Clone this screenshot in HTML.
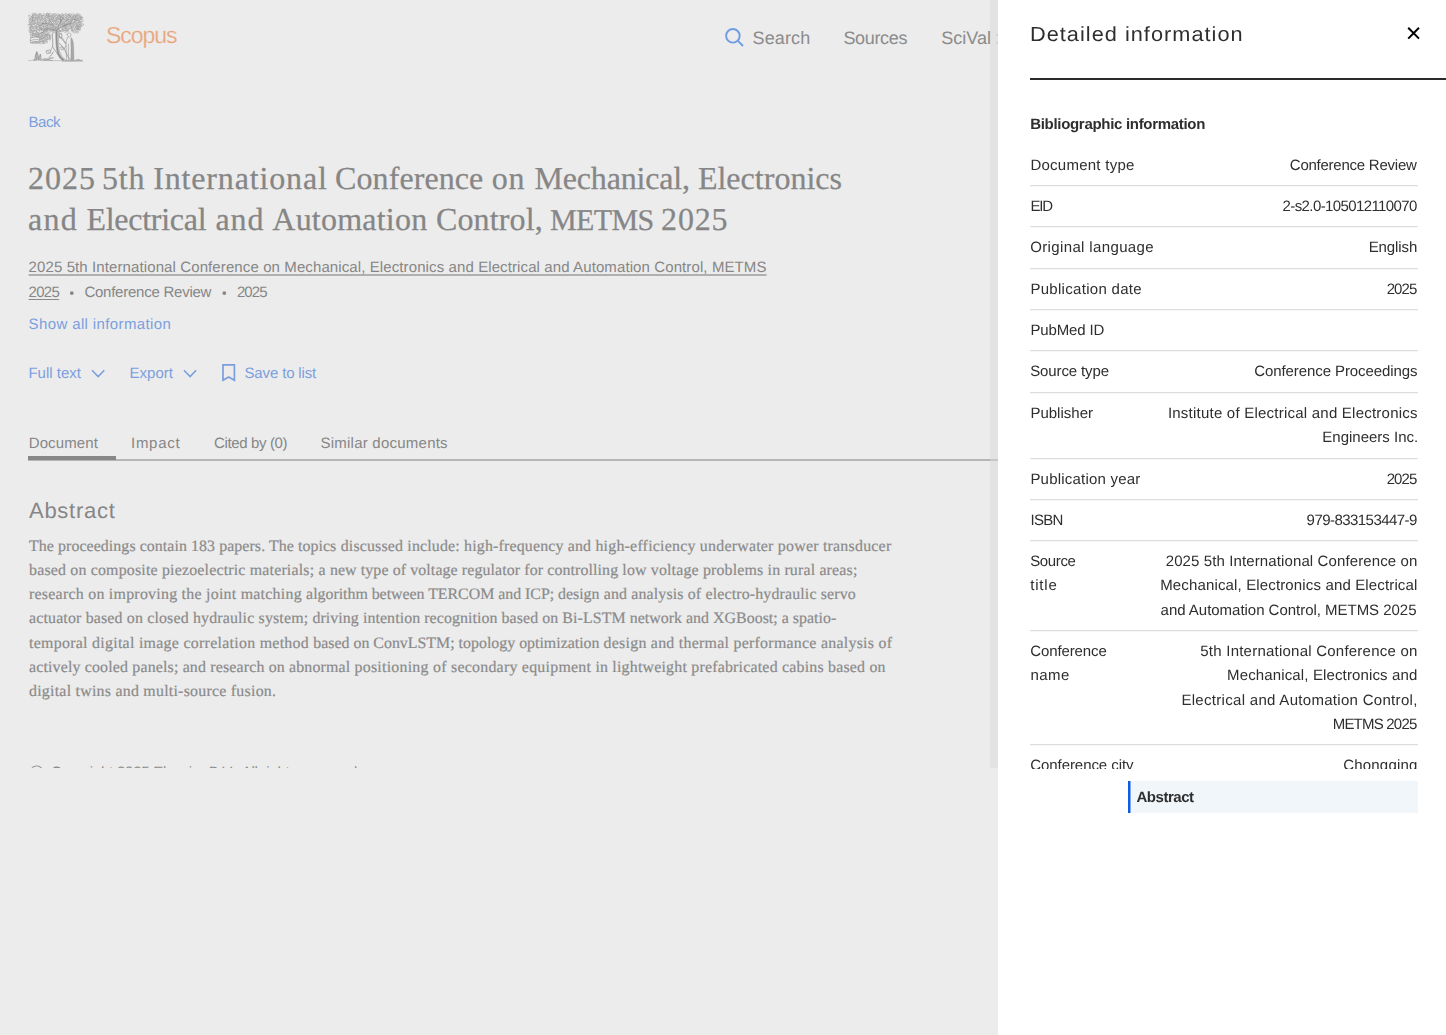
<!DOCTYPE html>
<html lang="en">
<head>
<meta charset="utf-8">
<title>Scopus - Document details</title>
<style>
*{box-sizing:border-box;margin:0;padding:0}
html,body{width:1446px;height:1035px;overflow:hidden;background:#ececec}
body{font-family:"Liberation Sans",sans-serif;position:relative;text-rendering:geometricPrecision}
.t{position:absolute;white-space:nowrap;line-height:1;display:block}
.a{position:absolute;display:block}
#page{position:absolute;left:0;top:0;width:998px;height:768px;overflow:hidden;background:#ececec}
#strip{position:absolute;left:990px;top:0;width:8px;height:768px;background:#e3e3e3}
#panel{position:absolute;left:998px;top:0;width:448px;height:1035px;background:#fff}
#pclip{position:absolute;left:0;top:0;width:448px;height:769px;overflow:hidden;will-change:transform;opacity:.999}
.hr{position:absolute;left:32px;width:388px;height:1px;background:#dddddd;box-shadow:0 1px 0 #f7f7f7}
</style>
</head>
<body>

<div id="page">
<div id="strip"></div>
<svg id="logo" class="a" style="left:26px;top:10px" width="60" height="56" viewBox="26 10 60 56" fill="none" stroke-linecap="round" stroke-linejoin="round">
<path d="M31.8 14.4Q33.3 14.7 33.5 15.5Q33.2 15.8 31.5 16.6M33.3 13.2Q33.6 14.1 34.3 13.8Q35.0 14.1 34.4 15.6Q32.9 15.1 32.5 15.4Q32.1 14.9 32.5 14.5ZM33.9 14.7Q34.6 14.5 34.2 13.4Q34.8 13.4 35.8 13.8Q35.1 14.9 35.7 15.5ZM36.6 15.5Q35.9 14.2 36.2 13.3Q37.0 14.7 37.4 14.6M39.9 14.3Q39.3 14.7 39.9 15.1Q38.3 15.4 38.3 15.7Q39.0 15.5 38.3 14.3Q39.3 13.4 39.8 13.4ZM41.0 13.9Q40.9 14.9 41.9 15.9Q41.6 16.8 40.7 16.2Q40.3 15.6 39.0 15.0ZM43.3 13.4Q44.2 13.7 44.0 14.1Q44.0 15.4 43.5 15.7Q41.6 15.5 41.0 14.7M46.2 16.2Q44.3 15.9 43.8 15.4Q44.3 15.1 44.8 14.3Q45.7 14.3 46.1 14.0ZM48.7 14.7Q47.0 14.9 46.1 15.8Q46.1 14.7 47.0 13.4ZM46.9 15.7Q46.8 15.2 46.5 13.7Q47.0 13.0 48.7 13.4Q49.3 12.8 49.5 13.5Q48.4 15.1 48.7 16.2ZM52.0 15.4Q50.8 16.1 49.6 16.7Q49.4 15.3 48.6 14.0Q49.7 13.8 50.7 13.6M51.8 16.4Q51.8 16.7 50.9 15.8Q50.8 15.3 51.8 14.1Q53.1 13.8 53.9 14.7M53.5 16.0Q52.9 14.9 52.8 13.9Q54.5 13.5 55.5 13.5Q55.7 13.6 55.9 14.4Q56.4 14.4 55.4 15.6M55.5 16.0Q55.0 15.9 54.2 15.2Q54.3 14.2 55.8 14.6Q56.5 14.7 56.6 15.1ZM60.0 15.2Q58.8 15.3 57.5 16.2Q56.4 14.5 56.5 14.0Q56.8 13.5 58.4 14.0ZM57.9 15.5Q58.3 14.9 59.6 14.5Q60.1 14.8 60.2 14.7Q59.7 15.5 58.7 16.1M61.6 15.8Q61.7 14.8 60.9 14.6Q60.8 13.6 61.7 14.0Q62.6 14.7 62.5 14.3M62.3 14.9Q61.9 13.8 62.5 13.7Q62.9 13.5 63.8 14.8Q63.4 15.4 63.8 15.6ZM66.2 15.3Q64.7 15.4 64.3 14.4Q65.9 13.9 66.7 13.1M65.8 14.5Q67.0 14.9 68.2 14.4Q68.5 15.7 67.8 15.9Q67.4 16.5 66.7 15.8M69.1 15.3Q68.8 14.4 68.5 14.9Q69.0 15.2 68.1 14.2Q68.1 14.1 69.3 13.9M71.1 16.8Q70.1 15.6 68.7 15.5Q69.3 14.2 69.6 13.5Q70.8 14.5 71.5 14.9M73.3 14.9Q71.9 16.1 71.8 16.1Q71.0 15.8 71.2 13.9M75.0 15.2Q74.6 15.6 73.9 16.7Q73.0 16.0 73.3 15.8Q73.0 15.5 72.7 14.0Q73.0 13.1 73.6 13.2M75.0 15.9Q74.6 14.9 74.7 14.4Q76.7 14.3 77.0 14.0Q77.1 14.7 77.7 15.6Q76.5 15.0 76.1 15.9ZM78.4 16.0Q78.1 15.1 76.5 14.1Q76.9 13.2 78.3 13.6Q79.7 14.1 79.8 15.0M80.1 14.4Q80.1 15.5 80.1 16.0Q78.5 16.1 78.1 15.7Q77.7 15.1 78.8 14.5M29.3 17.6Q28.6 15.7 28.5 15.2Q28.9 15.9 30.0 15.2Q29.7 16.0 30.6 16.8M32.0 17.4Q31.5 16.5 31.0 17.0Q32.2 17.0 32.0 15.6Q32.4 15.4 32.8 15.3Q33.0 16.7 33.3 17.2ZM33.2 16.2Q33.4 17.0 33.8 17.0Q32.8 17.1 33.2 17.9Q33.3 17.2 31.9 17.6Q31.9 17.5 32.6 16.5ZM35.1 18.1Q34.9 17.5 34.1 17.1Q34.6 17.1 36.0 16.5Q36.9 16.5 36.5 17.2ZM37.2 18.0Q36.8 17.5 35.6 17.7Q36.6 16.4 36.2 15.1Q36.6 15.1 38.0 16.0ZM38.9 18.2Q38.1 16.6 38.5 16.4Q38.6 16.0 39.8 16.5Q40.0 17.3 39.7 18.0ZM41.6 16.6Q42.1 17.2 41.5 18.1Q39.9 17.6 39.7 17.3Q39.7 17.3 40.1 16.0Q40.0 15.3 40.9 15.1M42.2 15.2Q42.7 16.1 42.8 17.4Q41.9 18.1 41.5 17.3ZM45.2 18.2Q43.9 16.7 43.5 15.5Q44.9 17.0 46.3 17.3ZM46.8 15.7Q47.0 15.6 48.6 17.0Q48.0 17.3 47.2 18.1Q47.2 17.9 45.7 16.5M47.4 16.4Q47.2 15.4 47.6 15.1Q47.8 14.9 48.7 15.5Q48.6 15.8 48.8 17.1Q47.8 16.6 47.6 16.9M49.7 16.9Q49.2 17.2 49.1 16.2Q48.7 14.9 49.2 15.0Q50.1 16.0 50.8 15.9ZM50.5 16.5Q50.9 16.1 52.3 16.5Q52.1 17.2 51.5 17.5ZM54.0 17.1Q53.1 17.3 52.1 17.0Q52.1 15.7 52.5 15.0Q54.2 15.9 54.3 16.2ZM53.2 17.4Q53.3 17.2 55.0 15.8Q55.4 17.3 56.1 17.8ZM59.3 16.9Q58.9 18.0 58.4 17.7Q57.1 17.2 57.1 16.7Q58.0 17.0 57.8 15.9ZM57.3 17.2Q58.4 16.9 59.0 15.4Q59.6 17.4 59.9 19.1ZM61.8 16.5Q61.1 17.6 61.9 17.6Q60.7 17.3 60.7 16.8Q60.9 16.5 60.9 15.8ZM62.6 16.0Q62.8 14.9 63.3 15.2Q63.5 16.0 64.1 17.2Q63.9 17.7 62.8 18.2Q62.5 16.7 61.6 16.7ZM66.8 17.5Q66.8 17.9 65.8 17.4Q65.1 17.3 63.9 16.5Q63.9 16.7 64.7 15.8Q65.9 15.5 66.6 16.0ZM67.2 18.1Q66.1 18.3 66.0 17.5Q65.5 17.2 66.2 16.7Q67.0 16.0 67.5 15.7Q68.5 16.9 68.3 17.9ZM68.4 15.0Q68.7 14.9 69.7 14.9Q69.8 16.2 70.6 16.0Q70.8 17.4 69.8 17.3Q69.1 17.5 67.1 16.9M69.2 16.6Q69.0 15.5 69.2 15.4Q70.1 15.7 70.7 15.7Q70.3 16.7 70.8 17.2ZM72.6 17.6Q71.2 17.9 71.1 17.2Q72.6 16.8 72.9 16.2ZM75.4 17.4Q73.6 17.2 73.4 16.8Q74.6 15.5 74.5 15.3ZM76.6 15.9Q77.1 17.4 77.8 17.6Q76.0 17.9 75.5 17.8Q74.8 17.8 75.1 16.2ZM79.4 15.9Q79.8 16.3 78.7 17.6Q78.3 16.3 76.6 16.5Q76.4 15.3 77.0 15.0M81.1 16.4Q81.1 16.6 80.9 18.3Q79.2 18.6 79.0 17.4Q78.9 17.4 79.6 16.2M82.3 17.3Q80.7 17.1 80.5 16.3Q81.3 16.4 81.7 16.0M30.5 18.3Q30.0 18.1 30.8 19.0Q30.7 19.1 29.7 20.0Q29.1 19.4 29.1 19.1Q28.8 18.3 29.9 18.3ZM33.1 18.5Q33.6 18.1 32.8 18.9Q32.5 18.7 31.2 19.4Q30.2 18.3 30.7 18.1Q31.8 18.6 32.1 17.5ZM34.1 20.4Q33.7 19.9 32.4 19.5Q32.9 19.0 31.8 18.2Q32.4 17.6 34.3 17.6Q34.1 18.4 35.3 17.7M34.8 19.9Q35.2 19.2 34.8 17.6Q36.0 17.6 36.7 18.0Q36.4 18.1 36.7 19.4M36.8 19.1Q37.4 17.8 36.9 17.7Q36.9 17.6 38.1 18.4Q37.8 19.1 38.1 19.8ZM38.1 16.6Q38.8 17.1 40.1 18.3Q38.5 19.5 38.2 19.3ZM42.1 17.9Q42.2 18.8 42.2 18.9Q41.8 18.7 41.7 19.4Q41.5 19.7 40.5 18.9Q41.3 18.6 41.3 17.7M42.3 19.4Q42.2 17.8 42.1 17.7Q43.8 17.9 44.3 18.0M45.8 19.4Q45.2 19.6 45.5 19.8Q43.9 20.1 43.7 19.5Q43.8 18.8 44.2 18.6Q45.4 18.4 45.8 18.2M46.1 17.3Q46.8 17.2 47.2 18.3Q46.9 19.1 47.2 20.3Q46.5 20.2 44.4 18.6M50.0 18.4Q49.2 19.2 48.9 19.5Q48.8 19.3 47.7 18.1ZM50.5 18.1Q51.1 18.5 50.8 19.3Q50.1 19.0 49.1 19.2Q49.0 18.8 48.9 18.0ZM51.2 18.7Q51.1 17.2 52.6 17.3Q53.8 18.3 53.5 18.9ZM53.8 17.4Q54.8 17.9 54.5 18.2Q54.0 18.4 53.1 19.2Q53.0 18.0 52.8 17.7ZM56.8 19.1Q55.5 19.8 55.9 19.3Q55.6 19.1 55.5 18.7Q56.0 18.8 56.0 17.8Q56.4 17.9 57.2 18.2M58.7 19.3Q58.1 19.0 56.2 20.3Q56.8 19.1 56.7 17.5ZM58.8 18.4Q60.1 18.6 59.8 17.6Q60.1 17.5 61.0 18.3Q60.3 18.3 59.7 19.4ZM63.0 18.8Q60.9 19.4 60.2 19.0Q60.8 18.4 61.5 17.0ZM64.2 19.4Q62.3 19.5 61.8 18.8Q63.1 18.5 63.2 17.7ZM65.6 19.7Q65.4 20.0 64.2 19.5Q64.8 18.7 65.6 17.3Q66.0 17.4 66.7 19.0M67.5 20.0Q66.2 19.6 65.9 20.5Q65.8 19.2 65.8 18.6Q66.2 18.1 66.3 17.8Q67.8 19.3 68.6 19.5ZM69.2 17.7Q68.9 18.5 70.3 18.8Q70.3 18.8 69.2 20.0Q68.5 19.7 68.4 18.6ZM70.5 19.1Q70.2 18.9 70.6 18.0Q70.7 17.6 71.3 18.0Q71.8 18.5 71.9 18.6Q72.0 19.2 71.2 19.4M73.3 17.5Q72.9 18.5 73.5 18.0Q73.5 18.8 72.5 18.7Q71.8 18.0 71.7 18.5Q72.5 18.8 72.0 17.5ZM74.8 18.0Q75.5 17.9 76.3 18.8Q75.7 19.8 75.8 20.0Q75.3 19.6 73.8 19.3Q73.1 19.2 73.6 18.1M77.0 17.5Q76.7 18.4 76.8 19.3Q75.3 19.0 74.9 20.2Q75.5 18.7 74.6 17.6ZM77.1 18.5Q78.4 18.0 78.3 18.1Q77.8 18.9 78.7 19.7Q78.3 19.8 77.6 19.5ZM79.6 19.9Q79.3 18.5 80.4 16.8Q80.9 17.7 81.8 19.7M82.7 17.7Q81.7 19.2 82.1 19.4Q80.9 19.4 80.6 19.3Q80.7 18.7 80.1 17.4Q80.4 16.7 80.8 17.3ZM29.3 21.7Q29.7 20.6 28.8 20.5Q29.8 20.4 29.5 19.3Q30.8 18.9 30.9 19.7Q30.5 19.8 30.4 21.2M31.4 21.7Q31.9 20.6 31.2 20.4Q31.6 19.2 32.3 19.2Q32.2 20.7 32.8 21.1ZM33.8 19.5Q34.0 20.0 33.1 21.7Q33.2 21.4 32.4 19.5ZM34.4 20.3Q35.0 19.9 34.5 19.5Q34.5 19.4 35.6 19.6Q36.4 19.5 36.0 20.3Q35.9 19.9 35.6 20.6ZM38.3 21.6Q37.8 20.7 36.8 20.9Q36.7 19.5 37.2 19.6M37.2 20.9Q38.1 19.7 39.8 19.4Q40.9 19.6 41.0 20.1Q39.4 21.2 38.9 22.8ZM39.4 20.5Q40.6 20.6 41.6 19.5Q40.8 20.1 40.6 21.9M43.0 21.0Q42.9 20.4 42.2 20.7Q41.0 19.9 41.3 18.8Q42.3 18.9 43.1 18.9M45.6 21.2Q44.5 20.8 43.3 21.3Q42.8 20.6 43.1 19.4ZM45.8 20.2Q46.2 20.8 46.5 19.8Q46.5 20.1 47.1 20.8Q47.0 21.1 46.6 22.0Q45.4 21.9 45.3 21.1ZM49.6 20.8Q49.2 21.4 48.4 21.0Q48.7 21.2 47.7 20.2Q48.0 20.3 49.7 20.0ZM51.4 19.3Q51.1 19.9 50.4 21.8Q50.1 21.5 49.4 19.7ZM52.7 21.7Q52.0 20.5 50.5 20.0Q51.2 19.8 52.0 18.9ZM54.7 19.9Q53.8 20.2 54.5 21.1Q54.4 20.8 53.1 21.4Q53.1 20.5 52.9 19.6ZM56.9 21.3Q56.3 20.7 54.9 20.0Q56.9 19.9 57.3 19.3M57.5 21.6Q57.6 20.5 56.4 20.7Q57.5 19.4 57.5 19.7Q58.5 20.3 58.6 20.6ZM60.1 19.4Q60.7 20.2 61.0 21.4Q59.8 21.6 59.1 21.0M61.1 21.2Q60.3 21.5 60.1 20.2Q61.4 20.4 61.5 19.0Q61.0 19.5 62.0 20.7M62.1 19.7Q62.2 19.5 63.5 19.6Q63.6 20.1 64.1 20.4Q63.8 21.7 63.4 21.8Q63.4 21.3 61.9 20.8ZM64.2 21.1Q65.9 21.1 66.4 20.5Q66.4 21.9 65.4 21.8M66.0 20.0Q65.7 18.8 66.9 19.2Q67.7 19.8 67.9 20.2Q67.8 20.5 66.4 21.2ZM68.7 18.7Q68.8 18.6 68.8 19.9Q67.9 21.1 68.3 20.9Q67.7 20.4 67.1 20.1ZM70.0 19.8Q70.5 19.4 71.1 19.4Q71.2 20.7 72.7 20.7Q71.6 21.9 70.2 21.6ZM73.5 19.4Q72.6 20.0 72.6 20.9Q72.4 20.2 71.4 20.5Q71.4 20.4 72.0 19.0ZM74.4 21.3Q74.9 20.3 73.9 19.6Q75.2 19.4 75.2 19.0Q75.2 19.8 75.5 20.6ZM76.3 19.6Q76.2 19.7 77.1 20.3Q76.9 20.4 76.0 21.0Q76.4 19.8 75.2 19.5M78.7 21.0Q78.0 20.0 76.8 20.4Q77.5 20.2 77.1 19.3Q78.2 18.3 78.6 18.8M78.6 18.5Q79.2 18.2 80.4 18.8Q79.6 20.3 80.0 21.1Q78.9 20.5 78.6 20.3M83.2 21.5Q82.6 21.4 80.4 21.6Q81.7 20.1 81.6 19.9Q82.1 19.6 83.2 20.1M29.8 21.3Q30.3 22.6 30.5 22.6Q29.6 23.5 29.8 23.5Q29.5 23.5 28.7 22.2M31.6 21.2Q32.4 22.7 33.4 23.4Q33.0 23.5 31.4 24.3ZM33.5 20.5Q34.4 20.1 35.1 20.7Q34.6 22.6 35.2 23.6Q34.1 23.1 33.8 23.3Q33.8 21.8 32.3 21.4ZM34.7 21.7Q35.2 21.4 35.5 21.6Q36.2 22.4 36.0 23.0Q35.8 22.6 34.8 23.2Q34.8 22.9 34.2 22.2ZM37.4 23.3Q37.1 22.8 36.9 22.2Q36.9 22.1 37.5 21.8Q37.1 22.4 38.1 23.1M38.6 21.6Q39.5 22.7 39.9 22.4Q39.8 22.5 39.1 23.3Q38.1 22.1 37.9 22.1ZM42.2 23.5Q40.7 24.1 40.3 23.3Q41.0 22.1 40.7 21.6Q40.6 21.3 42.0 22.2M44.4 23.2Q43.8 24.3 43.3 23.8Q42.3 22.5 42.6 22.5Q43.0 21.8 43.7 22.1M43.9 21.6Q44.5 20.9 45.5 21.8Q45.3 23.0 44.1 23.7Q43.8 24.1 43.3 24.5Q42.9 23.4 42.4 22.3ZM45.9 22.6Q47.0 22.0 46.6 21.4Q47.3 21.7 47.5 22.6ZM48.6 21.0Q49.9 20.5 49.6 21.0Q49.9 21.3 49.3 22.4Q49.7 22.8 48.9 22.6Q48.0 22.6 48.1 22.0M49.9 20.8Q50.8 22.4 50.7 22.6Q50.1 23.6 49.0 23.2ZM53.5 22.3Q53.3 22.5 52.8 23.8Q51.7 23.8 51.2 23.1Q51.3 23.0 51.7 21.7M55.5 20.8Q55.4 22.1 55.2 23.9Q54.6 24.2 54.0 23.6Q53.3 22.3 53.0 21.6ZM56.4 23.1Q54.8 22.2 54.3 21.2Q54.5 21.3 55.4 20.8Q56.3 20.3 57.6 20.9M59.0 21.1Q57.5 22.7 57.4 23.9Q56.9 23.1 55.9 22.0M60.3 23.7Q60.3 23.3 59.1 22.3Q59.7 22.1 60.8 22.0M61.4 23.7Q60.5 23.2 60.3 22.6Q60.8 22.5 61.1 21.0Q62.4 20.6 62.2 21.6ZM62.5 21.9Q63.6 22.8 65.3 22.9Q64.2 23.4 62.4 23.9M66.1 23.1Q64.6 23.8 64.1 23.2Q64.2 22.1 63.8 21.3Q64.5 22.0 65.5 21.8M67.4 22.8Q66.8 22.4 65.6 21.2Q66.8 21.4 66.7 20.6Q67.5 20.7 68.8 21.8M69.2 23.7Q67.8 23.4 67.3 22.4Q69.5 22.4 70.2 22.2ZM71.9 23.4Q71.2 23.7 70.6 23.6Q70.8 22.4 70.0 22.3Q71.4 22.9 71.6 22.5ZM71.5 22.9Q70.8 22.4 70.9 21.8Q72.4 21.2 72.7 21.1Q73.4 21.8 74.5 23.0Q74.1 23.8 73.2 23.4ZM74.2 21.3Q73.9 21.2 75.1 21.2Q75.6 22.5 75.6 22.9Q75.2 23.9 75.3 23.3Q74.2 23.3 74.1 22.4ZM74.6 22.0Q75.0 21.7 75.8 20.7Q76.1 22.0 76.6 22.2Q75.5 23.1 75.3 22.7M79.4 21.5Q77.9 23.1 76.8 23.4Q77.5 22.3 76.7 20.8ZM79.8 23.0Q79.7 23.2 78.1 22.5Q79.4 20.8 79.3 20.4Q79.7 20.6 80.6 22.2ZM29.7 22.6Q29.7 23.0 31.2 24.7Q30.4 23.8 28.0 24.6M31.9 24.9Q30.4 24.8 30.3 24.8Q29.9 24.0 30.4 23.5Q30.1 22.8 31.0 23.7Q32.5 23.8 32.3 24.5M32.4 24.7Q31.9 24.7 32.8 23.1Q34.0 24.4 34.1 24.1Q33.2 24.0 33.2 25.3M35.5 25.3Q34.7 24.6 33.8 23.8Q35.3 24.0 36.2 22.7M36.7 24.6Q36.5 24.1 37.1 23.3Q37.4 23.2 38.2 24.0Q37.7 24.0 38.1 25.3M39.3 23.8Q39.5 24.2 40.3 24.4Q39.8 25.5 39.7 25.4Q39.6 25.7 38.6 24.8ZM39.4 24.0Q40.3 24.2 41.7 24.1Q41.3 25.6 40.7 25.5Q39.2 25.6 39.1 25.0ZM42.3 22.6Q43.5 23.4 43.8 23.2Q42.6 23.6 42.6 25.1Q41.8 24.2 41.8 24.5ZM46.1 24.5Q45.9 25.2 45.2 25.4Q44.7 25.2 44.1 24.0Q44.0 23.8 44.7 23.4Q44.4 22.9 45.6 23.1ZM45.9 25.2Q44.9 23.8 44.4 23.8Q45.0 23.1 45.9 22.7Q47.2 23.4 47.9 24.7ZM47.7 24.7Q48.4 23.8 48.2 23.2Q48.8 23.4 49.4 23.5Q49.9 24.7 49.1 25.0ZM51.1 23.6Q51.9 23.4 51.4 23.8Q50.9 24.4 50.9 25.3Q50.2 24.4 49.7 24.8Q50.0 24.2 49.3 23.4ZM51.0 24.6Q51.8 23.6 51.3 23.7Q51.9 23.9 53.0 24.1Q51.6 25.7 51.8 25.7ZM54.2 23.1Q54.4 23.3 54.5 23.8Q53.7 24.4 53.1 25.0Q53.1 24.2 52.8 23.8Q53.4 23.1 53.1 23.4M54.8 22.7Q55.4 22.3 55.3 22.8Q55.5 22.5 56.6 23.2Q57.4 23.1 57.1 24.3Q55.6 25.0 55.2 24.4M57.5 21.9Q57.7 22.2 58.8 23.6Q57.9 24.8 58.2 25.1Q57.8 24.6 56.0 24.3M59.3 25.6Q59.1 25.7 57.9 25.1Q59.5 23.9 60.3 23.3ZM60.7 22.9Q62.1 22.7 62.7 22.7Q62.9 23.2 62.5 24.9Q62.0 24.3 60.5 25.0M64.1 26.1Q63.7 24.4 62.5 23.7Q63.0 24.0 63.7 23.6Q64.8 24.8 65.1 24.7ZM65.7 24.6Q65.9 24.5 65.1 24.9Q63.9 24.7 64.0 24.2Q63.8 23.9 64.9 23.5M66.0 24.1Q67.1 23.4 67.5 23.1Q67.9 23.3 67.7 24.7ZM68.5 25.2Q67.7 24.6 68.0 23.9Q68.8 23.6 69.6 23.7ZM70.2 24.3Q70.3 23.3 69.6 23.4Q69.7 22.3 70.7 22.8Q70.8 23.3 71.2 23.8ZM72.7 24.5Q71.8 23.6 72.0 23.4Q72.2 23.3 73.8 22.4ZM73.6 22.6Q73.7 23.5 74.8 25.3Q73.3 24.8 72.8 24.7M75.4 23.9Q76.4 23.5 76.8 23.5Q77.0 24.8 78.2 24.6Q77.6 25.3 76.5 25.3ZM78.2 22.7Q78.6 24.7 80.2 25.1Q80.0 25.5 78.8 26.6Q78.1 25.2 76.3 24.6ZM80.9 22.9Q80.0 23.3 79.4 25.1Q79.4 24.4 78.8 22.6ZM83.7 24.8Q82.6 24.6 81.6 25.9Q81.0 26.4 80.8 25.3Q80.1 25.3 80.3 24.1Q80.8 23.7 81.7 23.2ZM29.9 26.8Q28.8 26.8 28.8 25.9Q28.4 25.3 29.1 24.6Q29.2 24.4 30.8 25.1M30.5 26.8Q30.6 25.9 31.5 25.2Q32.2 25.3 32.8 26.0ZM33.3 24.3Q34.5 25.1 35.2 25.7Q34.0 26.9 33.0 27.4M35.7 27.4Q35.5 27.5 35.0 26.1Q35.9 25.5 36.4 25.7Q36.6 25.5 36.1 26.8ZM36.7 23.7Q37.4 24.7 38.0 24.5Q37.9 25.3 38.8 25.3Q37.2 26.0 36.7 27.3Q35.7 26.3 36.1 26.0ZM39.6 27.4Q39.9 26.9 38.9 26.5Q39.6 26.3 39.2 25.7Q40.4 25.4 40.7 25.7Q40.0 26.7 40.4 26.8ZM40.5 27.4Q40.3 26.1 39.4 25.3Q40.2 24.9 40.7 24.8Q42.3 25.9 42.4 25.7M43.2 25.4Q43.3 26.9 43.6 27.2Q42.9 27.1 41.3 25.8ZM44.3 24.3Q45.5 25.5 46.6 25.6Q46.3 26.4 45.4 26.9Q44.3 26.9 43.5 26.6ZM48.0 27.9Q46.9 27.6 45.2 26.7Q46.0 25.3 46.4 24.7Q46.5 25.5 48.0 26.0M49.1 26.1Q48.4 25.8 47.3 26.6Q47.3 25.1 48.0 24.9ZM50.6 25.6Q50.6 27.1 50.4 27.5Q49.6 27.7 49.6 26.3ZM52.5 25.0Q52.5 26.2 53.3 26.2Q53.4 26.8 51.9 26.4Q52.4 25.6 51.3 25.2M52.5 26.5Q53.0 26.5 52.8 25.5Q52.9 25.9 53.9 25.5Q54.4 25.6 53.9 26.3Q53.9 25.9 53.0 27.0M54.8 25.9Q55.0 24.4 55.5 24.5Q56.3 25.1 56.5 24.9Q56.1 26.3 56.2 26.6ZM57.5 26.9Q56.7 27.0 57.4 25.8Q58.3 26.2 58.6 25.2Q59.5 25.6 58.8 26.1M60.9 27.1Q58.9 27.2 58.3 26.5Q58.9 25.7 60.5 24.7M61.0 26.4Q61.2 26.0 61.1 24.3Q62.4 25.2 63.0 24.8Q62.7 26.0 61.5 27.0M64.6 24.8Q64.9 26.4 64.3 26.8Q62.9 26.9 63.2 26.8Q63.1 25.3 62.3 24.7M65.9 26.4Q65.2 26.3 63.2 25.7Q65.2 24.5 65.9 24.1ZM67.3 25.7Q67.4 27.1 66.3 27.2Q65.0 27.0 65.3 25.7ZM68.1 24.9Q68.7 24.7 70.3 25.5Q69.5 26.9 68.8 27.3ZM72.0 26.2Q70.8 26.8 70.8 27.8Q70.2 26.6 70.3 24.6ZM74.0 25.9Q73.5 26.7 71.7 27.3Q71.1 26.5 71.4 24.9M73.9 24.5Q73.9 24.8 74.4 25.5Q73.7 25.2 73.5 26.2Q73.2 26.5 73.0 25.3M77.8 25.9Q77.7 27.0 76.7 27.2Q76.4 27.5 74.8 26.8Q76.0 25.3 77.1 25.1M76.6 26.2Q76.7 25.2 77.8 24.9Q78.9 24.8 78.8 26.1Q78.1 27.1 78.1 27.3Q78.4 26.4 77.0 26.5ZM79.8 24.3Q80.1 24.2 81.7 25.5Q80.0 26.4 79.8 27.7Q78.4 27.2 78.4 25.9ZM81.4 24.2Q82.4 25.5 82.2 25.7Q81.8 26.0 81.5 26.8Q80.1 26.4 79.6 26.3M30.5 28.7Q29.8 28.1 29.9 28.8Q28.9 28.7 29.6 27.5Q29.5 28.2 30.6 27.5ZM32.5 28.9Q31.6 28.4 30.2 26.7Q31.2 26.8 31.4 25.7Q31.7 27.4 32.8 27.8ZM32.7 28.4Q31.8 27.2 31.9 26.9Q32.7 26.3 33.6 26.9Q33.1 27.1 34.0 27.7ZM36.0 29.0Q34.9 28.9 34.8 27.5Q34.6 26.5 35.3 26.9Q35.6 28.0 36.7 27.8ZM37.2 28.7Q37.2 28.6 36.2 27.3Q37.3 27.1 37.9 26.4Q37.6 27.3 38.7 27.8M38.0 28.0Q37.5 26.7 38.2 26.4Q38.3 26.4 39.8 26.6Q39.4 27.1 40.1 28.6M40.4 27.4Q41.5 27.2 42.0 28.0Q41.6 28.0 39.9 29.1ZM43.2 27.7Q42.5 29.0 42.9 29.3Q42.3 28.7 41.3 28.3Q41.8 27.4 42.0 26.9ZM46.0 26.8Q46.4 27.7 45.5 28.0Q45.3 29.0 44.0 28.5Q43.7 28.3 44.1 26.6ZM47.0 28.0Q46.9 28.6 46.1 29.0Q45.5 28.8 45.2 28.6Q45.6 28.2 45.9 27.3ZM47.6 27.3Q47.7 27.6 49.1 27.2Q49.4 27.6 49.4 28.2Q48.8 29.1 47.6 29.0ZM49.4 27.1Q50.1 27.8 52.0 27.7Q51.7 28.6 51.8 28.9Q50.3 28.8 49.1 28.7ZM53.4 29.4Q52.9 28.9 51.5 28.9Q52.1 28.4 51.6 27.1Q52.9 27.5 53.6 27.0ZM52.3 27.4Q53.3 27.9 54.0 27.4Q54.7 28.1 54.2 28.5Q53.3 28.1 53.3 29.3ZM56.7 27.2Q55.8 27.1 56.2 28.2Q55.1 27.6 55.0 27.1Q54.8 26.8 55.9 26.9ZM58.4 27.7Q58.4 28.1 58.3 29.4Q58.3 29.4 56.9 29.1Q56.6 27.6 57.7 27.3M59.2 27.0Q59.2 26.8 60.4 27.7Q60.0 27.9 59.3 29.3Q59.3 28.6 58.9 28.6Q58.3 27.9 58.5 27.3ZM62.3 28.7Q60.8 27.4 60.5 27.5Q60.5 26.3 60.7 25.6Q62.3 27.0 63.3 27.8M63.6 28.5Q62.5 27.9 62.6 27.3Q63.7 26.7 64.6 26.6Q64.9 27.3 64.5 28.0M63.4 27.1Q64.3 26.8 64.3 25.9Q64.6 26.0 65.5 27.6Q65.4 27.4 64.4 28.5M64.8 27.7Q65.8 26.9 67.1 27.4Q66.5 28.1 66.2 30.1M68.8 28.6Q67.5 28.5 66.6 27.4Q67.9 26.7 68.4 26.4M71.6 27.4Q70.6 28.5 70.9 28.5Q70.2 28.2 69.9 28.8Q69.5 28.1 69.9 27.5Q70.8 26.6 70.1 26.7M71.5 28.1Q70.5 28.5 71.0 27.3Q71.5 26.3 72.9 25.8Q73.6 27.5 73.1 27.7ZM75.4 27.7Q75.4 28.8 74.0 29.0Q74.7 28.3 73.9 27.0M75.9 28.8Q74.9 28.3 75.2 26.5Q76.7 26.6 77.5 26.2Q77.6 26.9 77.1 29.1M78.4 26.8Q78.8 27.2 78.8 27.6Q77.3 28.8 77.2 28.9Q77.3 28.2 77.0 28.0ZM78.5 26.6Q79.4 26.3 80.2 26.1Q80.3 27.9 80.6 28.5Q79.9 28.6 78.6 29.6ZM29.1 30.4Q29.8 28.5 30.1 27.9Q30.7 29.6 31.6 29.9M30.7 30.3Q31.6 30.5 31.1 29.1Q31.7 29.7 32.1 29.4Q31.3 30.6 31.5 30.5ZM35.1 29.4Q34.1 29.9 34.0 31.4Q33.4 30.1 33.0 30.3Q32.6 30.1 33.4 29.4M36.4 30.3Q35.9 30.1 34.3 30.7Q34.1 30.1 34.9 28.2M36.1 28.7Q37.6 29.0 38.2 28.7Q37.6 29.4 38.1 30.2Q38.0 30.9 37.4 30.0ZM40.0 30.1Q40.0 30.6 38.9 30.3Q38.9 29.7 38.7 29.1Q38.8 28.9 39.5 28.6Q39.9 28.8 40.3 28.9ZM41.7 29.8Q41.3 30.2 39.7 30.4Q39.3 30.1 40.5 28.6M41.6 30.4Q41.6 29.0 41.3 28.5Q42.3 27.7 42.3 28.1Q43.4 29.3 44.4 30.0Q43.4 30.0 43.2 31.1M43.6 30.7Q43.8 29.8 44.5 28.5Q46.1 28.8 46.8 29.9Q46.1 30.3 45.7 31.0ZM46.8 30.9Q46.9 30.8 46.2 29.9Q46.9 30.0 46.3 28.6Q47.0 29.5 47.6 29.1Q47.1 30.2 47.8 30.0ZM46.5 30.9Q46.4 29.2 47.4 29.0Q48.0 29.8 49.0 30.1ZM49.5 30.3Q49.8 29.0 49.4 28.6Q49.4 28.0 50.5 28.4Q50.4 29.8 50.7 30.4ZM51.1 30.3Q52.2 30.4 52.3 29.1Q52.8 29.2 53.1 30.5ZM54.2 29.3Q53.9 29.8 54.1 30.5Q53.6 31.1 52.9 30.2ZM55.8 31.0Q54.5 30.6 54.3 29.1Q55.7 28.1 57.2 27.8M58.1 31.7Q57.4 30.3 55.7 30.2Q56.4 29.2 57.9 29.5M58.9 29.0Q60.2 30.3 60.2 30.0Q59.7 30.5 59.4 30.8Q59.2 30.9 58.1 30.3ZM60.2 30.7Q61.7 30.3 62.6 28.5Q62.5 30.4 62.8 31.2M64.2 30.4Q63.8 30.3 62.6 30.8Q63.2 29.1 62.3 28.4ZM64.2 29.6Q65.4 28.5 65.0 28.0Q66.4 27.8 66.2 29.0Q65.7 29.6 65.7 29.9M65.9 30.3Q65.2 29.7 65.6 28.4Q66.9 29.1 68.0 30.1ZM68.6 30.8Q68.7 29.9 67.4 29.0Q67.4 28.6 68.2 28.7Q68.8 28.7 69.2 29.6M68.3 30.1Q69.5 28.9 70.2 28.2Q71.3 28.7 72.0 29.9Q72.2 30.3 70.8 31.5M71.9 30.1Q71.5 29.9 70.8 29.2Q71.1 29.4 72.2 28.1ZM72.7 29.4Q74.2 29.0 74.4 29.3Q75.3 29.6 75.0 29.9Q74.0 31.2 73.6 31.0ZM78.2 29.5Q76.2 29.3 75.8 30.4Q75.8 29.4 76.1 28.2ZM78.3 29.0Q78.4 29.6 78.3 30.0Q77.4 30.0 76.7 30.0Q76.1 28.7 77.1 28.9ZM80.3 29.0Q79.6 30.5 80.3 30.5Q79.3 29.8 79.2 30.6Q79.6 29.2 78.7 28.8ZM31.3 32.8Q30.4 31.8 29.1 32.2Q29.2 31.5 29.3 31.3Q28.9 30.9 29.8 29.8Q30.8 30.6 31.2 31.4ZM33.0 31.5Q31.9 31.8 31.7 32.5Q31.4 32.2 30.5 32.1Q30.7 30.5 32.1 30.2Q32.5 31.0 32.8 30.2M33.4 32.6Q32.4 33.4 32.5 32.7Q32.9 32.2 32.6 30.8Q33.2 29.9 32.9 30.3Q33.9 30.6 33.9 31.6ZM36.5 30.6Q37.2 31.5 36.7 31.8Q35.9 31.6 36.3 31.8Q35.8 30.8 34.7 31.5Q34.4 30.8 35.5 30.6M38.9 30.0Q39.3 30.5 39.4 31.9Q38.8 32.2 38.9 32.5Q37.9 32.2 36.8 32.2Q36.9 30.9 36.4 30.7ZM41.5 31.0Q42.1 29.9 42.9 30.2Q43.1 30.4 43.8 30.2Q44.4 32.2 44.0 32.6Q42.7 32.9 41.6 32.5ZM44.3 32.6Q44.1 31.5 43.1 30.5Q43.9 29.6 45.1 29.5Q45.2 30.2 45.4 30.3Q46.2 31.5 45.8 31.7M47.4 31.5Q47.1 31.4 47.1 32.4Q46.9 32.1 45.8 31.7Q45.3 30.9 46.1 30.7ZM50.6 30.5Q50.6 30.2 51.4 31.3Q51.3 32.2 50.5 32.1Q49.7 31.5 49.8 31.1M51.6 30.9Q52.9 29.9 52.9 30.0Q53.8 30.6 53.1 32.1M55.0 31.6Q54.6 32.9 53.3 33.1Q53.0 32.3 52.6 31.8Q53.5 30.5 53.6 30.4ZM57.1 32.9Q56.6 33.5 56.4 33.5Q55.1 32.7 55.1 31.8Q54.6 30.6 55.4 30.0Q56.5 30.1 57.4 31.1ZM57.6 33.0Q56.9 32.1 57.4 30.6Q57.8 30.7 59.4 31.8ZM60.7 31.3Q60.7 30.8 60.0 31.9Q59.1 32.1 59.1 30.9Q59.9 31.0 60.2 30.4ZM60.4 30.5Q60.5 30.3 61.8 30.2Q62.1 30.4 62.1 31.7Q61.0 32.1 60.6 31.9ZM65.8 30.4Q65.4 31.8 66.5 31.9Q66.1 32.3 64.1 32.1Q63.6 32.1 63.8 31.0ZM67.7 30.6Q68.4 30.5 67.9 31.9Q67.9 31.4 67.3 32.3Q67.1 32.1 66.3 31.5Q66.2 31.6 66.7 30.9ZM72.7 32.1Q72.6 31.3 71.5 30.6Q71.7 31.2 72.8 30.4Q72.7 31.2 73.3 31.3M74.3 33.1Q73.9 32.4 72.9 31.9Q72.8 31.2 73.7 30.5Q75.2 31.9 75.3 31.9ZM77.2 31.5Q76.8 31.7 76.4 32.3Q76.2 31.4 75.7 31.3Q75.8 30.1 76.0 30.4M77.0 31.2Q78.0 31.1 78.3 31.3Q78.8 31.6 78.2 33.0Q77.0 33.7 76.8 33.2ZM32.2 31.1Q32.9 32.2 33.1 33.7Q32.5 33.5 32.0 34.8Q31.2 34.5 30.0 33.5Q29.7 32.7 30.5 31.7M34.3 33.8Q32.9 34.9 32.3 34.8Q32.1 34.7 32.1 33.8Q33.6 32.7 33.9 32.9M35.9 34.2Q35.1 33.8 34.2 33.6Q34.6 33.5 35.1 32.6Q36.3 32.6 36.3 32.7ZM36.4 32.8Q38.0 32.1 38.0 32.9Q37.8 34.0 37.3 34.6Q37.2 34.6 36.0 34.8ZM39.1 35.2Q39.1 34.7 38.2 34.8Q37.9 34.3 37.5 32.9Q37.7 33.1 39.0 32.6Q38.8 33.9 40.0 33.8ZM40.5 33.4Q40.8 32.8 40.4 32.7Q40.9 32.7 41.4 32.5Q42.3 33.2 42.1 33.5Q42.2 33.4 41.8 34.0M41.4 34.6Q42.3 33.1 41.9 32.3Q42.7 32.6 43.2 32.3Q42.7 33.6 43.6 33.5ZM43.9 33.9Q43.0 33.3 43.6 33.3Q45.2 33.1 45.3 33.0Q45.3 33.3 45.0 34.3M45.8 32.5Q46.4 32.4 47.1 33.2Q47.0 33.8 47.1 35.2Q46.5 34.4 45.6 34.3ZM47.3 33.1Q48.2 32.5 48.9 31.7Q48.9 32.0 49.7 32.6Q48.8 34.1 48.0 34.2M32.3 34.2Q32.1 34.7 32.9 35.8Q30.9 35.6 30.3 36.5Q30.6 35.3 30.2 34.9Q30.8 34.1 30.3 33.9M34.4 34.7Q34.0 35.3 33.7 36.1Q33.4 35.0 32.5 35.1Q32.6 34.1 32.9 33.9Q32.5 33.9 33.5 33.7ZM34.8 34.3Q35.6 34.4 36.0 34.2Q37.2 35.3 37.0 35.5Q36.8 35.9 36.5 36.9Q36.1 36.3 34.4 36.1ZM36.6 33.6Q37.9 33.6 38.2 34.5Q38.2 36.2 37.6 36.7Q36.3 36.2 36.2 36.9ZM37.7 36.0Q37.9 35.3 39.7 34.8Q39.9 36.2 40.4 36.2ZM41.3 36.8Q40.2 37.3 39.9 36.4Q39.7 36.1 40.9 34.8Q42.3 35.9 42.6 35.8ZM42.5 35.9Q42.1 34.5 41.9 34.5Q42.9 34.8 43.1 34.2Q43.5 34.3 43.5 35.6ZM46.2 36.3Q45.5 36.6 44.4 37.4Q44.2 37.2 43.9 35.7Q44.3 35.9 44.4 34.7Q45.2 35.2 45.8 34.2ZM48.1 34.6Q48.4 34.7 47.4 35.9Q46.1 36.3 45.6 35.9Q45.9 35.5 45.2 34.3Q46.4 35.0 46.9 34.2M48.8 33.3Q49.1 35.0 49.4 35.7Q49.1 34.4 47.4 34.5ZM51.1 35.0Q51.6 35.5 50.9 36.1Q51.2 36.3 50.6 36.5Q50.4 35.5 49.2 35.7Q49.7 34.9 49.1 35.2ZM31.7 37.0Q32.2 38.1 32.1 38.4Q31.6 38.7 31.1 38.4Q30.3 37.9 30.7 37.9Q30.4 36.9 30.8 36.7M33.8 35.8Q34.2 36.6 34.0 36.8Q33.8 36.8 33.6 37.8Q32.1 38.1 32.2 37.2Q33.0 37.4 32.7 36.1ZM36.5 37.9Q36.6 37.5 35.3 38.3Q35.4 38.0 34.2 37.3Q35.5 36.2 35.6 35.3Q37.0 35.3 36.9 36.7M38.0 38.2Q37.7 37.1 35.8 36.9Q37.0 36.5 38.5 36.4ZM39.1 38.6Q39.1 37.6 38.6 36.4Q40.1 37.0 41.1 38.4M40.3 38.0Q40.2 37.2 40.0 37.1Q41.4 36.6 41.5 36.4Q40.9 37.1 41.8 37.2Q41.2 37.2 41.6 38.2ZM41.3 38.2Q41.1 37.4 41.5 36.7Q41.8 36.0 43.0 36.3Q42.6 37.8 43.3 38.3ZM44.2 36.1Q44.3 35.0 45.0 35.5Q45.9 35.9 46.1 36.6Q45.7 37.3 45.0 38.4Q44.4 38.3 43.8 38.0ZM44.5 36.9Q44.9 36.7 45.7 35.6Q46.3 35.4 47.5 36.3Q47.6 37.4 46.9 38.3M48.2 38.1Q47.6 37.3 47.1 37.6Q47.6 37.5 46.8 35.9Q47.9 34.8 49.4 35.3Q49.1 36.8 49.4 37.0ZM48.9 37.2Q49.4 37.3 49.3 36.1Q49.7 36.5 50.6 36.3Q51.2 37.6 50.3 38.1ZM31.4 37.8Q32.2 37.4 32.8 38.0Q33.3 37.9 32.8 39.2Q32.4 39.8 31.7 39.3ZM34.2 39.1Q34.5 39.8 33.3 40.0Q32.7 40.6 32.1 39.7Q31.8 39.4 32.4 38.3ZM34.4 37.5Q35.6 37.5 35.8 38.2Q35.6 38.2 35.3 39.7Q34.5 38.7 33.8 39.0M39.4 38.2Q39.3 39.3 37.8 39.9Q36.6 39.5 36.3 37.7ZM38.3 38.9Q39.1 37.6 38.4 37.8Q39.2 37.6 40.3 38.8Q40.8 38.7 39.7 39.7M41.3 38.5Q42.4 38.5 42.1 38.9Q41.3 40.0 41.9 39.9Q41.4 39.3 40.9 39.7Q40.9 39.0 40.8 39.5ZM42.5 39.5Q41.7 39.1 41.6 38.1Q41.9 38.1 43.3 37.9ZM45.6 38.0Q45.7 38.4 45.8 38.6Q45.6 39.3 44.1 39.5Q44.3 38.8 43.9 37.7ZM46.3 39.6Q45.6 38.9 46.1 38.3Q46.0 37.6 46.9 38.2Q46.6 38.7 47.8 38.9Q46.8 38.7 47.0 39.8M50.0 38.8Q50.5 40.1 50.1 40.3Q49.3 39.3 47.3 39.5Q47.8 39.6 48.0 38.1M50.2 37.6Q50.1 38.6 51.1 39.0Q49.3 38.7 49.1 38.7ZM31.1 41.1Q31.8 41.3 31.0 40.5Q30.9 40.3 32.0 38.7Q33.4 39.3 33.1 38.8Q33.1 40.0 33.0 40.9ZM34.1 43.2Q33.8 42.9 32.9 41.9Q32.1 41.5 32.8 40.3Q34.1 40.4 35.1 40.0Q35.2 40.5 35.0 42.5ZM36.6 38.7Q36.0 40.2 36.5 41.2Q35.7 42.2 35.4 42.0Q34.5 40.1 34.4 39.5ZM36.7 40.2Q37.5 39.9 38.9 40.3Q38.9 41.8 38.5 42.1Q38.1 42.0 36.2 41.8ZM40.4 41.5Q38.9 41.8 38.8 42.7Q37.9 41.8 38.2 40.5Q38.9 39.5 38.8 39.7ZM41.1 40.0Q41.1 40.0 41.8 40.4Q42.4 40.9 42.2 41.4Q42.0 41.5 41.4 41.8Q41.4 40.9 40.6 41.3M41.5 40.8Q43.4 40.6 43.8 40.6Q44.3 40.9 43.4 41.9ZM44.2 40.9Q43.6 40.8 44.5 40.0Q45.0 40.1 45.4 39.5Q45.3 40.2 45.8 40.7ZM47.2 39.7Q47.6 39.8 46.7 40.9Q46.9 40.4 45.8 39.9ZM33.0 42.2Q33.0 42.8 32.8 43.6Q31.7 43.5 31.2 43.1Q31.1 43.2 31.4 41.9Q33.1 42.0 33.3 41.5M33.5 43.3Q33.8 43.6 32.9 43.0Q32.3 43.0 32.1 42.2Q32.8 41.9 32.8 41.2Q33.4 40.7 33.7 41.3ZM36.8 41.8Q36.6 43.5 35.8 43.6Q34.7 42.3 34.9 42.5Q34.9 41.9 35.4 41.9ZM37.6 42.8Q37.0 42.8 37.0 43.7Q36.2 42.7 35.4 43.3Q35.2 42.4 35.9 41.8ZM38.0 42.8Q37.8 42.0 39.2 41.9Q38.9 41.7 40.0 43.0Q38.6 43.3 38.5 43.4ZM40.1 42.7Q41.0 42.0 40.6 41.3Q40.8 42.3 41.8 43.2Q41.8 44.0 40.2 44.0M43.6 40.8Q43.9 42.7 44.5 43.5Q43.4 43.3 42.9 44.0Q43.0 43.3 42.5 41.6ZM43.8 40.8Q43.9 41.0 45.2 41.2Q45.7 42.5 44.7 43.3Q43.6 42.8 43.4 43.2ZM47.7 42.4Q47.5 42.8 47.0 43.1Q45.5 42.3 45.4 42.2Q46.5 42.3 46.7 41.3Z" stroke="#9b9b9b" stroke-width="0.5"/>
<path d="M56.5 32.5C56 28 54 25 50 21M56.8 31C58 26 60 22 63.5 18M57 30C60 27 65 25 71 23.5M55.5 30C52 29 47 28.5 41 29.5M52 25C50 24 46 23 42 23.5M60.5 22C61 20 60.5 17.5 60 16M66 24.5C68 22 71 20 75 19M47 28.8C45 31 42 33 38 34.5" stroke="#8e8e8e" stroke-width="0.7"/>
<path d="M30.6 38.6C33 36.8 36.5 36.6 39.6 37.8L39.8 42C36.6 41 33.2 41.2 30.8 42.8ZM31 40.6C33.6 39.2 36.8 39.2 39.7 40" stroke="#939393" stroke-width="0.6" fill="#ececec"/>
<path d="M55.2 32.2C55.8 38 55.6 44 56.4 49C57.2 54 58.8 57.8 62 60.3L66 60.3C62.6 58 60.2 54.4 59.2 49.6C58.3 44.4 58.4 38 58.8 32.2Z" fill="#cdcdcd" stroke="#939393" stroke-width="0.4"/>
<path d="M56.6 32.5C56.6 40 56.8 48 58.2 53C59.2 56 61 58.6 63.4 60" stroke="#8f8f8f" stroke-width="1.5"/>
<path d="M52.2 33.2C52.6 38 53 42 52.6 46.8M52.6 46.8C54.5 50 57.5 54 60.8 58.2M53.2 52C52 55 49.5 57.5 46.5 59.8M59.2 36C61 38 63.5 40.5 65.4 43.5M59.4 43.5C61.5 45 64 48 65.5 51.5C66.5 54 68 57 70 59.5M59.8 47.6C61.6 46 63.6 47 63 48.8C62.6 50 61 50 60.8 48.9M59.6 33.8L61.6 33.6 62 37.6 60 37.8Z" stroke="#8e8e8e" stroke-width="0.75"/>
<path d="M71 37.5C72.4 38.5 73.2 41 73.5 44C73.9 49 73.9 55 74 60.6L70.6 60.6C71 55 71 49 70.9 45C70.8 42 70.7 39.5 71 37.5Z" fill="#a8a8a8" stroke="#939393" stroke-width="0.3"/>
<path d="M67.2 34.6C67.4 33 69.4 32.4 70.6 33.6C71.4 34.6 71 36.2 69.8 36.8C68.4 37.2 67.2 36.2 67.2 34.6ZM67.6 37.4C66.2 40 65.6 43.5 66 47C66.4 51.5 66.6 56 66.4 60.6M66.4 60.6H74.6M68.4 44V60M66 43C64.6 41.5 63.4 40 62.6 38.4M66.2 45.5C65 47 64 48.5 63.6 50" stroke="#939393" stroke-width="0.6"/>
<path d="M28.4 60.7C33 59.8 38 60.2 44 60.4C50 60.6 56 60.6 62 60.7L82.6 60.7M62 61.3C68 61.5 76 61.3 82.4 61.2M76 60.4L77 58.8 78 60.4 79 59.2 80 60.4" stroke="#a6a6a6" stroke-width="0.55"/>
<path d="M35.2 60C34.6 57.5 35.4 54.5 36.8 51.8C38 54 38.6 56.5 38.6 59.6M36.8 51.8V59.8M38.8 59.8C39 57.5 39.6 55.5 40.4 54C41 56 41 58 40.8 60M41.5 60C43 58.6 45 58.4 47 59.2M44 60.6C46 59.6 49 59.6 52 60.6M48.6 59.4C50 58 52 57.4 53.4 58" stroke="#8e8e8e" stroke-width="0.7" fill="#c2c2c2"/>
<path d="M74.6 60.8L76.2 59.4 77.4 60.2 78.6 59 80 60 81.4 59.6 82.6 60.8Z M33 60.8L34.4 58.6 35.6 60.8Z" fill="#a4a4a4" stroke="none"/>
<path d="M46.4 50.6L50.2 49.8 50.8 53 47.2 53.6ZM50.4 51C51.4 49.8 51.8 48.8 51.6 48M47.6 51.4L49.6 52.6" stroke="#939393" stroke-width="0.6"/>
</svg>
<svg class="a" style="left:720px;top:24px" width="28" height="28" viewBox="720 24 28 28" fill="none" stroke="#6f9ce3" stroke-width="1.9" stroke-linecap="butt"><circle cx="732.9" cy="35.8" r="6.8"/><path d="M737.7 40.7L743 46"/></svg>
<svg class="a" style="left:88px;top:364px" width="150" height="22" viewBox="88 364 150 22" fill="none" stroke="#7b9fde" stroke-width="1.6"><path d="M92 370.2l6.15 6.3 6.15-6.3"/><path d="M184 370.2l6.1 6.3 6.1-6.3"/><path d="M223 364.9H234.4V380.2L228.7 376.9 223 380.2Z" stroke-width="1.7"/></svg>
<svg class="a" style="left:66px;top:288px" width="166" height="10" viewBox="66 288 166 10"><circle cx="71.8" cy="293.1" r="1.9" fill="#868686"/><circle cx="224.3" cy="293.1" r="1.9" fill="#868686"/></svg>
<svg class="a" style="left:994px;top:30px" width="4" height="16" viewBox="994 30 4 16"><rect x="996.3" y="34.4" width="1.7" height="1.1" fill="#c4c4c4"/><path d="M996.2 43.4l1.8-1.4" stroke="#c0c0c0" stroke-width="0.9"/></svg>
<div id="tabline" class="a" style="left:28px;top:459px;width:970px;height:2px;background:#b6b6b6"></div>
<div class="a" style="left:990px;top:459px;width:8px;height:2px;background:#c7c7c7"></div>
<div id="tabact" class="a" style="left:28px;top:456px;width:87.5px;height:4px;background:#878787"></div>
<span id="scopus" class="t" style="left:105.90px;top:24px;font-size:23px;letter-spacing:-1.003px;color:#e9a57c;font-family:'Liberation Sans', sans-serif;-webkit-text-stroke:0.2px #ececec">Scopus</span>
<span id="nsearch" class="t" style="left:752.50px;top:29px;font-size:18px;letter-spacing:0.136px;color:#8b8b8b;font-family:'Liberation Sans', sans-serif">Search</span>
<span id="nsources" class="t" style="left:843.40px;top:29px;font-size:18px;letter-spacing:-0.322px;color:#8b8b8b;font-family:'Liberation Sans', sans-serif">Sources</span>
<span id="nscival" class="t" style="left:941.30px;top:29px;font-size:18px;letter-spacing:0.023px;color:#8b8b8b;font-family:'Liberation Sans', sans-serif">SciVal</span>
<span id="back" class="t" style="left:28.50px;top:115px;font-size:15px;letter-spacing:-0.416px;color:#7b9fde;font-family:'Liberation Sans', sans-serif">Back</span>
<span id="t1_0" class="t" style="left:28.10px;top:162px;font-size:32px;letter-spacing:1.000px;color:#868686;font-family:'Liberation Serif', serif;-webkit-text-stroke:0.25px #868686">2025 </span>
<span id="t1_1" class="t" style="left:102.00px;top:162px;font-size:32px;letter-spacing:0.805px;color:#868686;font-family:'Liberation Serif', serif;-webkit-text-stroke:0.25px #868686">5th </span>
<span id="t1_2" class="t" style="left:153.20px;top:162px;font-size:32px;letter-spacing:0.851px;color:#868686;font-family:'Liberation Serif', serif;-webkit-text-stroke:0.25px #868686">International </span>
<span id="t1_3" class="t" style="left:335.10px;top:162px;font-size:32px;letter-spacing:0.082px;color:#868686;font-family:'Liberation Serif', serif;-webkit-text-stroke:0.25px #868686">Conference </span>
<span id="t1_4" class="t" style="left:491.80px;top:162px;font-size:32px;letter-spacing:0.800px;color:#868686;font-family:'Liberation Serif', serif;-webkit-text-stroke:0.25px #868686">on </span>
<span id="t1_5" class="t" style="left:534.50px;top:162px;font-size:32px;letter-spacing:-0.175px;color:#868686;font-family:'Liberation Serif', serif;-webkit-text-stroke:0.25px #868686">Mechanical, </span>
<span id="t1_6" class="t" style="left:697.90px;top:162px;font-size:32px;letter-spacing:0.022px;color:#868686;font-family:'Liberation Serif', serif;-webkit-text-stroke:0.25px #868686">Electronics </span>
<span id="t2_0" class="t" style="left:28.10px;top:203px;font-size:32px;letter-spacing:1.198px;color:#868686;font-family:'Liberation Serif', serif;-webkit-text-stroke:0.25px #868686">and </span>
<span id="t2_1" class="t" style="left:86.40px;top:203px;font-size:32px;letter-spacing:-0.265px;color:#868686;font-family:'Liberation Serif', serif;-webkit-text-stroke:0.25px #868686">Electrical </span>
<span id="t2_2" class="t" style="left:215.40px;top:203px;font-size:32px;letter-spacing:0.898px;color:#868686;font-family:'Liberation Serif', serif;-webkit-text-stroke:0.25px #868686">and </span>
<span id="t2_3" class="t" style="left:272.30px;top:203px;font-size:32px;letter-spacing:0.225px;color:#868686;font-family:'Liberation Serif', serif;-webkit-text-stroke:0.25px #868686">Automation </span>
<span id="t2_4" class="t" style="left:435.90px;top:203px;font-size:32px;letter-spacing:0.146px;color:#868686;font-family:'Liberation Serif', serif;-webkit-text-stroke:0.25px #868686">Control, </span>
<span id="t2_5" class="t" style="left:550.10px;top:206px;font-size:30px;letter-spacing:-0.650px;color:#868686;font-family:'Liberation Serif', serif;-webkit-text-stroke:0.25px #868686">METMS </span>
<span id="t2_6" class="t" style="left:661.10px;top:203px;font-size:32px;letter-spacing:0.800px;color:#868686;font-family:'Liberation Serif', serif;-webkit-text-stroke:0.25px #868686">2025 </span>
<span id="s1" class="t" style="left:28.60px;top:260px;font-size:15px;letter-spacing:0.104px;color:#868686;font-family:'Liberation Sans', sans-serif;text-decoration:underline;text-underline-offset:1.8px;text-decoration-thickness:1.5px;text-decoration-color:#b0b0b0">2025 5th International Conference on Mechanical, Electronics and Electrical and Automation Control, METMS</span>
<span id="s2" class="t" style="left:28.60px;top:285px;font-size:15px;letter-spacing:-0.709px;color:#868686;font-family:'Liberation Sans', sans-serif;text-decoration:underline;text-underline-offset:2px;text-decoration-thickness:1px;text-decoration-color:#8a8a8a">2025</span>
<span id="s4" class="t" style="left:84.40px;top:285px;font-size:15px;letter-spacing:-0.242px;color:#868686;font-family:'Liberation Sans', sans-serif">Conference Review</span>
<span id="s6" class="t" style="left:236.90px;top:285px;font-size:15px;letter-spacing:-0.909px;color:#868686;font-family:'Liberation Sans', sans-serif">2025</span>
<span id="showall" class="t" style="left:28.60px;top:317px;font-size:15px;letter-spacing:0.378px;color:#7b9fde;font-family:'Liberation Sans', sans-serif">Show all information</span>
<span id="fulltext" class="t" style="left:28.40px;top:366px;font-size:15px;letter-spacing:0.007px;color:#7b9fde;font-family:'Liberation Sans', sans-serif">Full text</span>
<span id="export" class="t" style="left:129.60px;top:366px;font-size:15px;letter-spacing:0.003px;color:#7b9fde;font-family:'Liberation Sans', sans-serif">Export</span>
<span id="save" class="t" style="left:244.50px;top:366px;font-size:15px;letter-spacing:-0.145px;color:#7b9fde;font-family:'Liberation Sans', sans-serif">Save to list</span>
<span id="tab1" class="t" style="left:28.70px;top:436px;font-size:15px;letter-spacing:0.129px;color:#868686;font-family:'Liberation Sans', sans-serif">Document</span>
<span id="tab2" class="t" style="left:131.00px;top:436px;font-size:15px;letter-spacing:0.711px;color:#868686;font-family:'Liberation Sans', sans-serif">Impact</span>
<span id="tab3" class="t" style="left:214.00px;top:436px;font-size:15px;letter-spacing:-0.357px;color:#868686;font-family:'Liberation Sans', sans-serif">Cited by (0)</span>
<span id="tab4" class="t" style="left:320.50px;top:436px;font-size:15px;letter-spacing:0.233px;color:#868686;font-family:'Liberation Sans', sans-serif">Similar documents</span>
<span id="abh" class="t" style="left:29.00px;top:500px;font-size:22px;letter-spacing:0.731px;color:#868686;font-family:'Liberation Sans', sans-serif">Abstract</span>
<span id="a1_0" class="t" style="left:29.00px;top:539px;font-size:15.9px;letter-spacing:0.079px;color:#8a8a8a;font-family:'Liberation Serif', serif;-webkit-text-stroke:0.2px #8a8a8a">The proceedings contain 183 papers. The topics </span>
<span id="a1_1" class="t" style="left:340.70px;top:539px;font-size:15.9px;letter-spacing:0.176px;color:#8a8a8a;font-family:'Liberation Serif', serif;-webkit-text-stroke:0.2px #8a8a8a">discussed include: high-frequency and </span>
<span id="a1_2" class="t" style="left:595.40px;top:539px;font-size:15.9px;letter-spacing:0.232px;color:#8a8a8a;font-family:'Liberation Serif', serif;-webkit-text-stroke:0.2px #8a8a8a">high-efficiency underwater power transducer</span>
<span id="a2_0" class="t" style="left:29.00px;top:563px;font-size:15.9px;letter-spacing:0.191px;color:#8a8a8a;font-family:'Liberation Serif', serif;-webkit-text-stroke:0.2px #8a8a8a">based on composite piezoelectric materials; a </span>
<span id="a2_1" class="t" style="left:329.90px;top:563px;font-size:15.9px;letter-spacing:0.112px;color:#8a8a8a;font-family:'Liberation Serif', serif;-webkit-text-stroke:0.2px #8a8a8a">new type of voltage regulator for controlling </span>
<span id="a2_2" class="t" style="left:622.30px;top:563px;font-size:15.9px;letter-spacing:0.171px;color:#8a8a8a;font-family:'Liberation Serif', serif;-webkit-text-stroke:0.2px #8a8a8a">low voltage problems in rural areas;</span>
<span id="a3_0" class="t" style="left:29.00px;top:587px;font-size:15.9px;letter-spacing:0.258px;color:#8a8a8a;font-family:'Liberation Serif', serif;-webkit-text-stroke:0.2px #8a8a8a">research on improving the joint matching </span>
<span id="a3_1" class="t" style="left:306.10px;top:587px;font-size:15.9px;letter-spacing:-0.018px;color:#8a8a8a;font-family:'Liberation Serif', serif;-webkit-text-stroke:0.2px #8a8a8a">algorithm between TERCOM and ICP; design </span>
<span id="a3_2" class="t" style="left:603.70px;top:587px;font-size:15.9px;letter-spacing:0.154px;color:#8a8a8a;font-family:'Liberation Serif', serif;-webkit-text-stroke:0.2px #8a8a8a">and analysis of electro-hydraulic servo</span>
<span id="a4_0" class="t" style="left:29.00px;top:611px;font-size:15.9px;letter-spacing:0.167px;color:#8a8a8a;font-family:'Liberation Serif', serif;-webkit-text-stroke:0.2px #8a8a8a">actuator based on closed hydraulic system; </span>
<span id="a4_1" class="t" style="left:312.40px;top:611px;font-size:15.9px;letter-spacing:0.084px;color:#8a8a8a;font-family:'Liberation Serif', serif;-webkit-text-stroke:0.2px #8a8a8a">driving intention recognition based on Bi-LSTM </span>
<span id="a4_2" class="t" style="left:629.70px;top:611px;font-size:15.9px;letter-spacing:0.032px;color:#8a8a8a;font-family:'Liberation Serif', serif;-webkit-text-stroke:0.2px #8a8a8a">network and XGBoost; a spatio-</span>
<span id="a5_0" class="t" style="left:29.00px;top:636px;font-size:15.9px;letter-spacing:0.287px;color:#8a8a8a;font-family:'Liberation Serif', serif;-webkit-text-stroke:0.2px #8a8a8a">temporal digital image correlation method </span>
<span id="a5_1" class="t" style="left:313.30px;top:636px;font-size:15.9px;letter-spacing:0.005px;color:#8a8a8a;font-family:'Liberation Serif', serif;-webkit-text-stroke:0.2px #8a8a8a">based on ConvLSTM; topology optimization </span>
<span id="a5_2" class="t" style="left:603.50px;top:636px;font-size:15.9px;letter-spacing:0.267px;color:#8a8a8a;font-family:'Liberation Serif', serif;-webkit-text-stroke:0.2px #8a8a8a">design and thermal performance analysis of</span>
<span id="a6_0" class="t" style="left:29.00px;top:660px;font-size:15.9px;letter-spacing:0.169px;color:#8a8a8a;font-family:'Liberation Serif', serif;-webkit-text-stroke:0.2px #8a8a8a">actively cooled panels; and research on abnormal </span>
<span id="a6_1" class="t" style="left:354.50px;top:660px;font-size:15.9px;letter-spacing:0.250px;color:#8a8a8a;font-family:'Liberation Serif', serif;-webkit-text-stroke:0.2px #8a8a8a">positioning of secondary equipment </span>
<span id="a6_2" class="t" style="left:595.40px;top:660px;font-size:15.9px;letter-spacing:0.211px;color:#8a8a8a;font-family:'Liberation Serif', serif;-webkit-text-stroke:0.2px #8a8a8a">in lightweight prefabricated cabins based on</span>
<span id="a7_0" class="t" style="left:29.00px;top:684px;font-size:15.9px;letter-spacing:0.246px;color:#8a8a8a;font-family:'Liberation Serif', serif;-webkit-text-stroke:0.2px #8a8a8a">digital twins and multi-source fusion.</span>
<span id="copyc" class="t" style="left:30.00px;top:763px;font-size:18px;letter-spacing:0.000px;color:#8a8a8a;font-family:'Liberation Sans', sans-serif">©</span>
<span id="copy" class="t" style="left:51.00px;top:765px;font-size:15px;letter-spacing:-0.240px;color:#8a8a8a;font-family:'Liberation Sans', sans-serif">Copyright 2025 Elsevier B.V., All rights reserved.</span>
</div>

<div id="panel">
<div id="pclip">
<svg class="a" style="left:404px;top:22px" width="22" height="22" viewBox="1402 22 22 22" fill="none" stroke="#000" stroke-width="2"><path d="M1408.2 27.7l10.8 10.9M1419 27.7l-10.8 10.9"/></svg>
<div class="a" style="left:32px;top:78px;width:416px;height:2px;background:#2b2b2b"></div>
<div class="hr" style="top:185px"></div>
<div class="hr" style="top:226px"></div>
<div class="hr" style="top:268px"></div>
<div class="hr" style="top:309px"></div>
<div class="hr" style="top:350px"></div>
<div class="hr" style="top:392px"></div>
<div class="hr" style="top:458px"></div>
<div class="hr" style="top:499px"></div>
<div class="hr" style="top:540px"></div>
<div class="hr" style="top:630px"></div>
<div class="hr" style="top:744px"></div>
<span id="ph" class="t" style="left:32.24px;top:25px;font-size:20.5px;letter-spacing:0.960px;color:#2e2e2e;font-family:'Liberation Sans', sans-serif;transform:scaleX(1.06);transform-origin:0 0">Detailed information</span>
<span id="bh" class="t" style="left:32.20px;top:117px;font-size:15px;letter-spacing:-0.306px;color:#2e2e2e;font-family:'Liberation Sans', sans-serif;font-weight:bold">Bibliographic information</span>
<span id="l1" class="t" style="left:32.40px;top:158px;font-size:15px;letter-spacing:0.255px;color:#2e2e2e;font-family:'Liberation Sans', sans-serif">Document type</span>
<span id="l2" class="t" style="left:32.40px;top:199px;font-size:15px;letter-spacing:-1.186px;color:#2e2e2e;font-family:'Liberation Sans', sans-serif">EID</span>
<span id="l3" class="t" style="left:32.20px;top:240px;font-size:15px;letter-spacing:0.366px;color:#2e2e2e;font-family:'Liberation Sans', sans-serif">Original language</span>
<span id="l4" class="t" style="left:32.40px;top:282px;font-size:15px;letter-spacing:0.300px;color:#2e2e2e;font-family:'Liberation Sans', sans-serif">Publication date</span>
<span id="l5" class="t" style="left:32.40px;top:323px;font-size:15px;letter-spacing:-0.138px;color:#2e2e2e;font-family:'Liberation Sans', sans-serif">PubMed ID</span>
<span id="l6" class="t" style="left:32.20px;top:364px;font-size:15px;letter-spacing:-0.120px;color:#2e2e2e;font-family:'Liberation Sans', sans-serif">Source type</span>
<span id="l7" class="t" style="left:32.40px;top:406px;font-size:15px;letter-spacing:0.008px;color:#2e2e2e;font-family:'Liberation Sans', sans-serif">Publisher</span>
<span id="l8" class="t" style="left:32.40px;top:472px;font-size:15px;letter-spacing:0.211px;color:#2e2e2e;font-family:'Liberation Sans', sans-serif">Publication year</span>
<span id="l9" class="t" style="left:32.40px;top:513px;font-size:15px;letter-spacing:-0.659px;color:#2e2e2e;font-family:'Liberation Sans', sans-serif">ISBN</span>
<span id="l10a" class="t" style="left:32.20px;top:554px;font-size:15px;letter-spacing:-0.357px;color:#2e2e2e;font-family:'Liberation Sans', sans-serif">Source</span>
<span id="l10b" class="t" style="left:32.20px;top:578px;font-size:15px;letter-spacing:0.800px;color:#2e2e2e;font-family:'Liberation Sans', sans-serif">title</span>
<span id="l11a" class="t" style="left:32.20px;top:644px;font-size:15px;letter-spacing:-0.101px;color:#2e2e2e;font-family:'Liberation Sans', sans-serif">Conference</span>
<span id="l11b" class="t" style="left:32.40px;top:668px;font-size:15px;letter-spacing:0.440px;color:#2e2e2e;font-family:'Liberation Sans', sans-serif">name</span>
<span id="l12" class="t" style="left:32.20px;top:758px;font-size:15px;letter-spacing:-0.058px;color:#2e2e2e;font-family:'Liberation Sans', sans-serif">Conference city</span>
<span id="v1" class="t" style="left:291.80px;top:158px;font-size:15px;letter-spacing:-0.242px;color:#2e2e2e;font-family:'Liberation Sans', sans-serif">Conference Review</span>
<span id="v2" class="t" style="left:284.60px;top:199px;font-size:15px;letter-spacing:-0.608px;color:#2e2e2e;font-family:'Liberation Sans', sans-serif">2-s2.0-105012110070</span>
<span id="v3" class="t" style="left:370.70px;top:240px;font-size:15px;letter-spacing:-0.092px;color:#2e2e2e;font-family:'Liberation Sans', sans-serif">English</span>
<span id="v4" class="t" style="left:388.70px;top:282px;font-size:15px;letter-spacing:-0.909px;color:#2e2e2e;font-family:'Liberation Sans', sans-serif">2025</span>
<span id="v6" class="t" style="left:256.30px;top:364px;font-size:15px;letter-spacing:-0.091px;color:#2e2e2e;font-family:'Liberation Sans', sans-serif">Conference Proceedings</span>
<span id="v7a" class="t" style="left:169.90px;top:406px;font-size:15px;letter-spacing:0.228px;color:#2e2e2e;font-family:'Liberation Sans', sans-serif">Institute of Electrical and Electronics</span>
<span id="v7b" class="t" style="left:324.30px;top:430px;font-size:15px;letter-spacing:-0.002px;color:#2e2e2e;font-family:'Liberation Sans', sans-serif">Engineers Inc.</span>
<span id="v8" class="t" style="left:388.70px;top:472px;font-size:15px;letter-spacing:-0.909px;color:#2e2e2e;font-family:'Liberation Sans', sans-serif">2025</span>
<span id="v9" class="t" style="left:308.60px;top:513px;font-size:15px;letter-spacing:-0.550px;color:#2e2e2e;font-family:'Liberation Sans', sans-serif">979-833153447-9</span>
<span id="v10a" class="t" style="left:167.70px;top:554px;font-size:15px;letter-spacing:0.113px;color:#2e2e2e;font-family:'Liberation Sans', sans-serif">2025 5th International Conference on</span>
<span id="v10b" class="t" style="left:162.20px;top:578px;font-size:15px;letter-spacing:0.145px;color:#2e2e2e;font-family:'Liberation Sans', sans-serif">Mechanical, Electronics and Electrical</span>
<span id="v10c" class="t" style="left:162.60px;top:603px;font-size:15px;letter-spacing:-0.027px;color:#2e2e2e;font-family:'Liberation Sans', sans-serif">and Automation Control, METMS 2025</span>
<span id="v11a" class="t" style="left:202.30px;top:644px;font-size:15px;letter-spacing:0.230px;color:#2e2e2e;font-family:'Liberation Sans', sans-serif">5th International Conference on</span>
<span id="v11b" class="t" style="left:229.10px;top:668px;font-size:15px;letter-spacing:0.134px;color:#2e2e2e;font-family:'Liberation Sans', sans-serif">Mechanical, Electronics and</span>
<span id="v11c" class="t" style="left:183.40px;top:693px;font-size:15px;letter-spacing:0.303px;color:#2e2e2e;font-family:'Liberation Sans', sans-serif">Electrical and Automation Control,</span>
<span id="v11d" class="t" style="left:334.70px;top:717px;font-size:15px;letter-spacing:-0.784px;color:#2e2e2e;font-family:'Liberation Sans', sans-serif">METMS 2025</span>
<span id="v12" class="t" style="left:345.20px;top:758px;font-size:15px;letter-spacing:0.198px;color:#2e2e2e;font-family:'Liberation Sans', sans-serif">Chongqing</span>
</div>
<div id="absbox" class="a" style="left:130px;top:781px;width:290px;height:32px;background:#f1f6fb"></div>
<svg class="a" style="left:129px;top:781px" width="5" height="32" viewBox="0 0 5 32"><rect x="1" y="0" width="2.5" height="32" fill="#0f5ce0"/></svg>
<div id="pfree" style="position:absolute;left:0;top:0;width:448px;height:1035px"><span id="abstxt" class="t" style="left:138.50px;top:790px;font-size:15px;letter-spacing:-0.479px;color:#2e2e2e;font-family:'Liberation Sans', sans-serif;font-weight:bold">Abstract</span></div>
</div>

</body>
</html>
